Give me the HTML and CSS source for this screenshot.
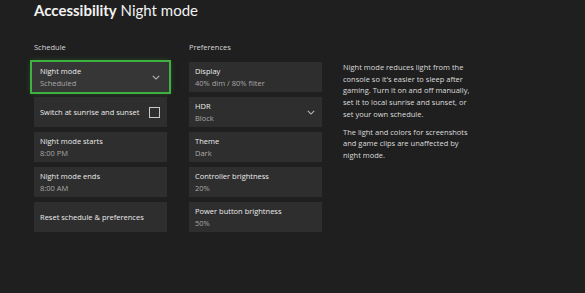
FILE: index.html
```html
<!DOCTYPE html>
<html>
<head>
    <link rel="stylesheet" href="styles.css">
</head>
<body>
    <h1 class="title"><b>Accessibility</b> Night mode</h1>

    <div class="page">
        <div class="column">
            <h2 class="label">Schedule</h2>
            <div class="card focused">
                <div class="text"><span>Night mode</span><small>Scheduled</small></div>
                <svg class="chev" viewBox="0 0 10 6"><path d="M1 1 L5 5 L9 1" /></svg>
            </div>
            <div class="card">
                <div class="text"><span>Switch at sunrise and sunset</span></div>
                <span class="check"></span>
            </div>
            <div class="card">
                <div class="text"><span>Night mode starts</span><small>8:00 PM</small></div>
            </div>
            <div class="card">
                <div class="text"><span>Night mode ends</span><small>8:00 AM</small></div>
            </div>
            <div class="card">
                <div class="text"><span>Reset schedule &amp; preferences</span></div>
            </div>
        </div>

        <div class="column">
            <h2 class="label">Preferences</h2>
            <div class="card">
                <div class="text"><span>Display</span><small>40% dim / 80% filter</small></div>
            </div>
            <div class="card">
                <div class="text"><span>HDR</span><small>Block</small></div>
                <svg class="chev" viewBox="0 0 10 6"><path d="M1 1 L5 5 L9 1" /></svg>
            </div>
            <div class="card">
                <div class="text"><span>Theme</span><small>Dark</small></div>
            </div>
            <div class="card">
                <div class="text"><span>Controller brightness</span><small>20%</small></div>
            </div>
            <div class="card">
                <div class="text"><span>Power button brightness</span><small>50%</small></div>
            </div>
        </div>

        <div class="about">
            <p>Night mode reduces light from the console so it's easier to sleep after gaming. Turn it on and off manually, set it to local sunrise and sunset, or set your own schedule.</p>
            <p>The light and colors for screenshots and game clips are unaffected by night mode.</p>
        </div>
    </div>
</body>
</html>
```

FILE: styles.css
```css
body { margin: 0; background: #1f1f1f; color: #e6e6e6; font-family: 'Open Sans', sans-serif; height: 293px; overflow: hidden; }
.title { margin: 0; padding: 0 0 0 34px; font-family: Lato, sans-serif; font-size: 15px; font-weight: normal; line-height: 20px; color: #f2f2f2; }
.title b { font-weight: 700; }
.page { display: flex; padding: 22px 0 0 34px; }
.column { width: 133px; display: flex; flex-direction: column; gap: 5px; margin-right: 22px; }
.label { margin: 0 0 5px; font-size: 7.5px; font-weight: normal; line-height: 10px; color: #d6d6d6; }
.card { height: 30px; background: #2e2e2e; display: flex; align-items: center; padding: 0 7px 0 6px; box-sizing: border-box; }
.card .text { flex: 1; display: flex; flex-direction: column; gap: 2px; }
.card span { font-size: 7.5px; line-height: 10px; color: #ececec; }
.card small { font-size: 7.5px; line-height: 10px; color: #a8a8a8; }
.focused { background: #363636; outline: 2px solid #3fb13f; margin: 0 -2px; padding: 0 9px 0 8px; box-shadow: 0 0 6px rgba(63, 177, 63, 0.6); }
.chev { width: 8px; height: 5px; fill: none; stroke: #bdbdbd; stroke-width: 1.3; }
.check { width: 9px; height: 9px; border: 1px solid #c8c8c8; }
.about { width: 130px; margin-left: -1px; padding-top: 20px; }
.about p { margin: 0 0 6px; font-size: 7.5px; line-height: 11.7px; color: #dcdcdc; }
```
